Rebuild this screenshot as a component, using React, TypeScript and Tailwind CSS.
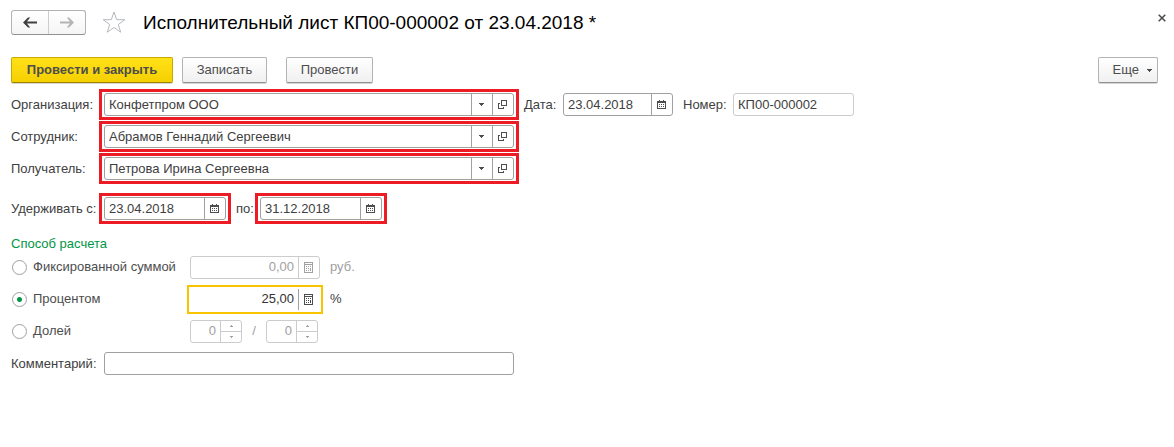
import { useState } from "react";
import type { ReactNode } from "react";

type Method = "fixed" | "percent" | "share";

const CalendarIcon = () => (
  <svg width="9" height="9" viewBox="0 0 9 9" fill="currentColor" shapeRendering="crispEdges">
    <path d="M2 0h1v1h3V0h1v1h2v8H0V1h2zM1 3v5h7V3z" fillRule="evenodd" />
    <path d="M2 4h1v1H2zM4 4h1v1H4zM6 4h1v1H6zM2 6h1v1H2zM4 6h1v1H4zM6 6h1v1H6z" />
  </svg>
);

const CalculatorIcon = () => (
  <svg width="9" height="11" viewBox="0 0 9 11" fill="currentColor" shapeRendering="crispEdges">
    <path d="M0 0h9v11H0zM1 1v1h7V1zM1 3v7h7V3z" fillRule="evenodd" />
    <path d="M2 4h1v1H2zM4 4h1v1H4zM6 4h1v1H6zM2 6h1v1H2zM4 6h1v1H4zM6 6h1v3H6zM2 8h1v1H2zM4 8h1v1H4z" />
  </svg>
);

const OpenIcon = () => (
  <svg width="9" height="9" viewBox="0 0 9 9" fill="none" stroke="currentColor" shapeRendering="crispEdges">
    <path d="M3.5 0.5h5v5h-5zM2 3.5H0.5v5h5V7" />
  </svg>
);

const CaretIcon = () => (
  <svg width="5" height="3" viewBox="0 0 5 3" fill="currentColor" shapeRendering="crispEdges">
    <path d="M0 0h5v1H4v1H3v1H2V2H1V1H0z" />
  </svg>
);

const ArrowIcon = ({ className }: { className?: string }) => (
  <svg className={className} width="14" height="11" viewBox="0 0 14 11" fill="currentColor">
    <path d="M0 5.5L5 0.5h2.2L4 4.4h10v2.2H4l3.2 3.9H5z" />
  </svg>
);

const StarIcon = () => (
  <svg width="24" height="22" viewBox="0 0 24 22" fill="none" stroke="#b3b8bd">
    <path d="M12 1l2.7 7.7h8.1l-6.5 4.8 2.4 7.7L12 16.5l-6.7 4.7 2.4-7.7L1.2 8.7h8.1z" />
  </svg>
);

const CloseIcon = () => (
  <svg width="8" height="8" viewBox="0 0 8 8" fill="none" stroke="currentColor" strokeWidth="1.6">
    <path d="M0.7 0.7l6.6 6.6M7.3 0.7L0.7 7.3" />
  </svg>
);

const Highlight = ({ children }: { children: ReactNode }) => (
  <div className="border-3 border-[#ed1c24] px-0.5 py-px">{children}</div>
);

const fieldBox = "flex h-[23px] overflow-hidden rounded-[3px] border border-[#a0a0a0] bg-white";
const fieldInput = "w-full min-w-0 flex-1 bg-transparent px-1 outline-none";
const fieldButton =
  "flex w-[21px] shrink-0 items-center justify-center border-l border-[#a0a0a0] pr-px text-[#4d4d4d]";
const plainButton =
  "h-[26px] rounded-[2px] border border-[#b3b3b3] border-b-[#919191] bg-linear-to-b from-white to-[#f0f0f0] text-[#4d4d4d] shadow-[0_1px_0_#d5d5d5]";

interface LookupRowProps {
  id: string;
  label: string;
  value: string;
  children?: ReactNode;
}

const LookupRow = ({ id, label, value, children }: LookupRowProps) => (
  <div className="flex items-center">
    <label htmlFor={id} className="w-22 shrink-0">
      {label}
    </label>
    <Highlight>
      <div className={`${fieldBox} w-[410px]`}>
        <input id={id} className={fieldInput} defaultValue={value} />
        <button type="button" aria-label="Выбрать" className={fieldButton}>
          <CaretIcon />
        </button>
        <button type="button" aria-label="Открыть" className={fieldButton}>
          <OpenIcon />
        </button>
      </div>
    </Highlight>
    {children}
  </div>
);

const DateField = ({ id, value, width }: { id: string; value: string; width: string }) => (
  <div className={`${fieldBox} ${width}`}>
    <input id={id} className={fieldInput} defaultValue={value} />
    <button type="button" aria-label="Календарь" className={fieldButton}>
      <CalendarIcon />
    </button>
  </div>
);

const Spinner = ({ label, disabled }: { label: string; disabled: boolean }) => (
  <div className="flex h-[23px] w-[52px] rounded-[3px] border border-[#cccccc] text-[#a0a0a0]">
    <input
      aria-label={label}
      className={`${fieldInput} text-right`}
      defaultValue="0"
      disabled={disabled}
    />
    <div className="flex w-[21px] shrink-0 flex-col border-l border-[#cccccc]">
      <button
        type="button"
        aria-label="Больше"
        disabled={disabled}
        className="flex flex-1 items-center justify-center border-b border-[#cccccc]"
      >
        <svg width="3" height="2" viewBox="0 0 3 2" fill="currentColor" shapeRendering="crispEdges">
          <path d="M1 0h1v1h1v1H0V1h1z" />
        </svg>
      </button>
      <button
        type="button"
        aria-label="Меньше"
        disabled={disabled}
        className="flex flex-1 items-center justify-center"
      >
        <svg width="3" height="2" viewBox="0 0 3 2" fill="currentColor" shapeRendering="crispEdges">
          <path d="M0 0h3v1H2v1H1V1H0z" />
        </svg>
      </button>
    </div>
  </div>
);

interface MethodOptionProps {
  label: string;
  checked: boolean;
  onSelect: () => void;
}

const MethodOption = ({ label, checked, onSelect }: MethodOptionProps) => (
  <label className="flex w-44 shrink-0 items-center gap-1.5 pl-px text-[#4d4d4d]">
    <input
      type="radio"
      name="method"
      checked={checked}
      onChange={onSelect}
      className="size-[15px] shrink-0 appearance-none rounded-full border border-[#a0a0a0] bg-white checked:bg-[radial-gradient(circle,#009646_0_2px,#ffffff_3px)]"
    />
    {label}
  </label>
);

interface AmountFieldProps {
  label: string;
  value: string;
  active: boolean;
}

const AmountField = ({ label, value, active }: AmountFieldProps) => (
  <div
    className={
      active
        ? "flex h-[29px] w-[136px] border-2 border-[#f9c300] py-0.5 pr-px text-[#333333]"
        : "mx-[3px] flex h-[23px] w-[130px] rounded-[3px] border border-[#cccccc] text-[#a0a0a0]"
    }
  >
    <input
      aria-label={label}
      className="w-full min-w-0 flex-1 bg-transparent px-1 text-right outline-none"
      defaultValue={value}
      disabled={!active}
    />
    <button
      type="button"
      aria-label="Калькулятор"
      disabled={!active}
      className={
        active
          ? "flex w-[22px] shrink-0 items-center justify-center border-l border-[#a0a0a0] pr-0.5 text-[#4d4d4d]"
          : "flex w-[21px] shrink-0 items-center justify-center border-l border-[#cccccc] pr-px"
      }
    >
      <CalculatorIcon />
    </button>
  </div>
);

const App = () => {
  const [method, setMethod] = useState<Method>("percent");

  return (
    <div className="min-h-screen bg-white pb-4 font-['Liberation_Sans',Arial,sans-serif] text-[13px] leading-4 text-[#404040]">
      <header className="flex items-start pt-2.5 pr-2 pl-[11px]">
        <div className="flex h-[25px] w-[75px] shrink-0 rounded-[3px] border border-[#b3b3b3] border-b-[#919191] bg-linear-to-b from-white to-[#f5f5f5]">
          <button
            type="button"
            aria-label="Назад"
            className="flex flex-1 items-center justify-center border-r border-[#cccccc] text-[#404040]"
          >
            <ArrowIcon />
          </button>
          <button
            type="button"
            aria-label="Вперед"
            className="flex flex-1 items-center justify-center text-[#b3b3b3]"
          >
            <ArrowIcon className="rotate-180" />
          </button>
        </div>
        <button type="button" aria-label="В избранное" className="ml-4 pt-px">
          <StarIcon />
        </button>
        <h1 className="ml-[17px] flex-1 text-[19px] leading-[26px] text-black">
          Исполнительный лист КП00-000002 от 23.04.2018 *
        </h1>
        <button type="button" aria-label="Закрыть" className="pt-1 text-[#4d4d4d]">
          <CloseIcon />
        </button>
      </header>

      <main className="pr-4 pl-[11px]">
        <div className="mt-[21px] flex items-center">
          <button
            type="button"
            className="h-[26px] w-[162px] rounded-[2px] border border-[#c9a800] border-b-[#a08600] bg-linear-to-b from-[#ffe117] to-[#f5d000] font-bold text-[#4d4d4d] shadow-[0_1px_0_#d5d5d5]"
          >
            Провести и закрыть
          </button>
          <button type="button" className={`${plainButton} ml-[9px] w-[85px]`}>
            Записать
          </button>
          <button type="button" className={`${plainButton} ml-[19px] w-[87px]`}>
            Провести
          </button>
          <button
            type="button"
            className={`${plainButton} ml-auto flex w-15 items-center justify-end gap-2 pr-[5px]`}
          >
            Еще
            <CaretIcon />
          </button>
        </div>

        <form className="mt-1.5" onSubmit={(e) => e.preventDefault()}>
          <div className="flex flex-col gap-px">
            <LookupRow id="organization" label="Организация:" value="Конфетпром ООО">
              <label htmlFor="date" className="w-11 shrink-0 pl-[5px]">
                Дата:
              </label>
              <DateField id="date" value="23.04.2018" width="w-[110px]" />
              <label htmlFor="number" className="ml-2.5 w-[50px] shrink-0">
                Номер:
              </label>
              <input
                id="number"
                readOnly
                defaultValue="КП00-000002"
                className="h-[23px] w-[121px] min-w-0 rounded-[3px] border border-[#cccccc] px-1 outline-none"
              />
            </LookupRow>
            <LookupRow id="employee" label="Сотрудник:" value="Абрамов Геннадий Сергеевич" />
            <LookupRow id="recipient" label="Получатель:" value="Петрова Ирина Сергеевна" />
          </div>

          <div className="mt-[9px] flex items-center">
            <label htmlFor="from" className="w-22 shrink-0">
              Удерживать с:
            </label>
            <Highlight>
              <DateField id="from" value="23.04.2018" width="w-[122px]" />
            </Highlight>
            <label htmlFor="to" className="w-6 shrink-0 pl-[5px]">
              по:
            </label>
            <Highlight>
              <DateField id="to" value="31.12.2018" width="w-[122px]" />
            </Highlight>
          </div>

          <fieldset className="mt-3">
            <legend className="leading-[15px] text-[#009646]">Способ расчета</legend>
            <div className="flex h-8 items-center">
              <MethodOption
                label="Фиксированной суммой"
                checked={method === "fixed"}
                onSelect={() => setMethod("fixed")}
              />
              <AmountField label="Сумма" value="0,00" active={method === "fixed"} />
              <span className="ml-[7px] text-[#a0a0a0]">руб.</span>
            </div>
            <div className="flex h-8 items-center">
              <MethodOption
                label="Процентом"
                checked={method === "percent"}
                onSelect={() => setMethod("percent")}
              />
              <AmountField label="Процент" value="25,00" active={method === "percent"} />
              <span className="ml-[7px]">%</span>
            </div>
            <div className="flex h-8 items-center">
              <MethodOption
                label="Долей"
                checked={method === "share"}
                onSelect={() => setMethod("share")}
              />
              <div className="ml-[3px] flex items-center text-[#a0a0a0]">
                <Spinner label="Числитель" disabled={method !== "share"} />
                <span className="w-6 text-center">/</span>
                <Spinner label="Знаменатель" disabled={method !== "share"} />
              </div>
            </div>
          </fieldset>

          <div className="mt-[5px] flex items-center">
            <label htmlFor="comment" className="w-[93px] shrink-0">
              Комментарий:
            </label>
            <input
              id="comment"
              className="h-[23px] w-full max-w-[410px] rounded-[3px] border border-[#a0a0a0] px-1 outline-none"
            />
          </div>
        </form>
      </main>
    </div>
  );
};

export default App;
